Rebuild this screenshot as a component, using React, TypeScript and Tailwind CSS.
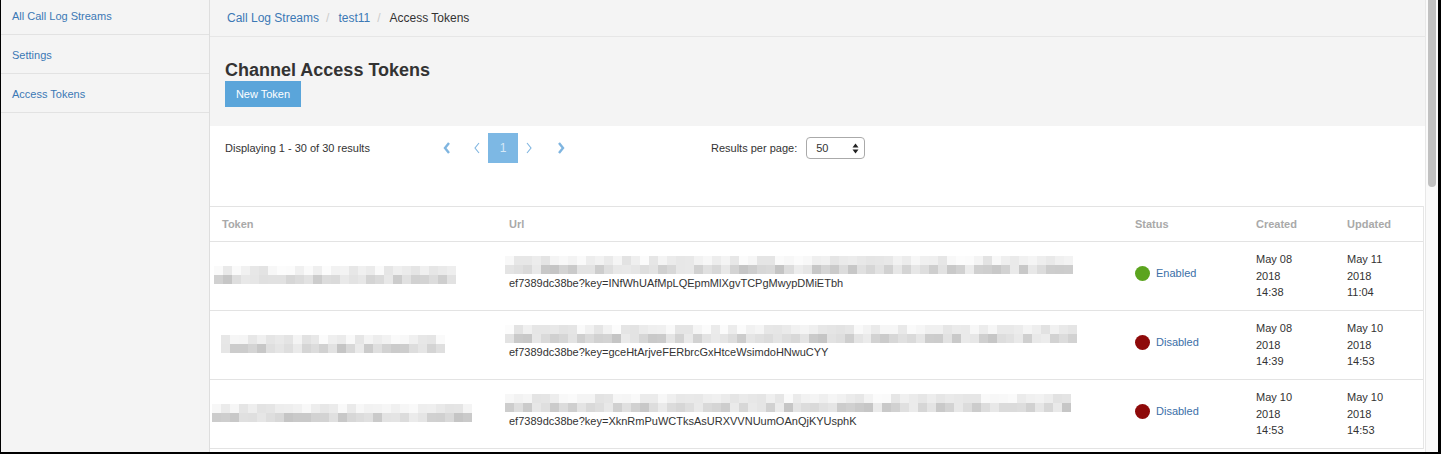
import React from "react";

const font = { fontFamily: '"Liberation Sans", Arial, sans-serif' };

// pseudo-random grays for the blurred (pixelated) cells
const shade = (seed: number, i: number, dark: boolean) => {
  const x = Math.sin(seed * 97.13 + i * 12.9898) * 43758.5453;
  const r = x - Math.floor(x);
  const base = dark ? 196 : 226;
  const span = dark ? 40 : 26;
  const v = Math.round(base + r * span);
  return `rgb(${v},${v},${v})`;
};

const Mosaic = ({ width, seed }: { width: number; seed: number }) => {
  const cols = Math.round(width / 9);
  return (
    <div className="flex flex-col" style={{ width }}>
      {[false, true].map((dark, row) => (
        <div key={row} className="flex h-[9px]">
          {Array.from({ length: cols }).map((_, i) => (
            <div
              key={i}
              className="h-full flex-1"
              style={{ background: shade(seed + row * 7, i, dark) }}
            />
          ))}
        </div>
      ))}
    </div>
  );
};

const Chevron = ({ dir, bold }: { dir: "l" | "r"; bold?: boolean }) => (
  <svg width="8" height="12" viewBox="0 0 8 12">
    <path
      d={dir === "l" ? "M6 1 L2 6 L6 11" : "M2 1 L6 6 L2 11"}
      fill="none"
      stroke="#7fb5e0"
      strokeWidth={bold ? 2.4 : 1.1}
    />
  </svg>
);

const rows = [
  {
    tokenW: 242,
    tokenOff: -4,
    urlW: 568,
    key: "INfWhUAfMpLQEpmMlXgvTCPgMwypDMiETbh",
    enabled: true,
    created: ["May 08", "2018", "14:38"],
    updated: ["May 11", "2018", "11:04"],
  },
  {
    tokenW: 224,
    tokenOff: 3,
    urlW: 572,
    key: "gceHtArjveFERbrcGxHtceWsimdoHNwuCYY",
    enabled: false,
    created: ["May 08", "2018", "14:39"],
    updated: ["May 10", "2018", "14:53"],
  },
  {
    tokenW: 260,
    tokenOff: -6,
    urlW: 566,
    key: "XknRmPuWCTksAsURXVVNUumOAnQjKYUsphK",
    enabled: false,
    created: ["May 10", "2018", "14:53"],
    updated: ["May 10", "2018", "14:53"],
  },
];

const cols = "grid grid-cols-[287px_626px_121px_91px_89px]";

export default function App() {
  return (
    <div
      className="flex h-[454px] w-[1441px] overflow-hidden border-b-2 border-l border-r-[3px] border-black bg-white text-[#333]"
      style={font}
    >
      {/* sidebar */}
      <aside className="flex w-[209px] shrink-0 flex-col border-r border-[#dedede] bg-[#f4f4f4] text-[11px] text-[#3b78b5]">
        <div className="flex h-[35px] items-center border-b border-[#e2e2e2] pb-[1px] pl-[11px]">
          All Call Log Streams
        </div>
        <div className="flex h-[39px] items-center border-b border-[#e2e2e2] pl-[11px] pt-[2px]">
          Settings
        </div>
        <div className="flex h-[39px] items-center border-b border-[#e2e2e2] pl-[11px] pt-[2px]">
          Access Tokens
        </div>
      </aside>

      {/* main */}
      <main className="flex w-[1215px] shrink-0 flex-col">
        <div className="flex h-[37px] items-center gap-[7px] border-b border-[#e6e6e6] bg-[#f4f4f4] pl-[17px] text-[12px]">
          <span className="text-[#3b78b5]">Call Log Streams</span>
          <span className="text-[#ccc]">/</span>
          <span className="ml-[2px] text-[#3b78b5]">test11</span>
          <span className="text-[#ccc]">/</span>
          <span className="ml-[2px] text-[#333]">Access Tokens</span>
        </div>
        <div className="flex h-[89px] flex-col bg-[#f4f4f4] pl-[15px] pt-[22px]">
          <h1 className="text-[18px] font-bold leading-[22px] text-[#333]">
            Channel Access Tokens
          </h1>
          <button className="h-[26px] w-[76px] bg-[#5aa5da] text-[11px] text-white">
            New Token
          </button>
        </div>

        <div className="flex h-[80px] items-start pl-[15px] pt-[7px] text-[11px]">
          <div className="w-[207px] pt-[7px] text-[11px]">
            Displaying 1 - 30 of 30 results
          </div>
          <div className="flex h-[30px] items-center">
            <span className="flex w-[30px] justify-center">
              <Chevron dir="l" bold />
            </span>
            <span className="flex w-[26px] justify-center pl-[4px]">
              <Chevron dir="l" />
            </span>
            <span className="flex h-[30px] w-[30px] items-center justify-center bg-[#7db8e4] text-[12px] text-[#d6e9f7]">
              1
            </span>
            <span className="flex w-[22px] justify-center">
              <Chevron dir="r" />
            </span>
            <span className="flex w-[40px] justify-center pl-[2px]">
              <Chevron dir="r" bold />
            </span>
          </div>
          <div className="ml-[131px] flex items-center gap-[9px] pt-[4px]">
            <span>Results per page:</span>
            <div className="flex h-[22px] w-[59px] items-center justify-between rounded-[4px] border border-[#aaa] bg-white pl-[9px] pr-[5px]">
              <span>50</span>
              <svg width="7" height="11" viewBox="0 0 7 11">
                <path d="M3.5 0.5 L6.5 4.5 L0.5 4.5 Z M3.5 10.5 L6.5 6.5 L0.5 6.5 Z" fill="#222" />
              </svg>
            </div>
          </div>
        </div>

        {/* table */}
        <div className="flex w-[1214px] flex-col border-r border-[#e6e6e6] text-[11px]">
          <div className={`${cols} h-[36px] items-center border-y border-[#e3e3e3] font-bold text-[#a9a9a9]`}>
            <div className="pl-[12px]">Token</div>
            <div className="pl-[12px]">Url</div>
            <div className="pl-[12px]">Status</div>
            <div className="pl-[12px]">Created</div>
            <div className="pl-[12px]">Updated</div>
          </div>
          {rows.map((r, idx) => (
            <div
              key={idx}
              className={`${cols} h-[69px] items-center border-b border-[#e3e3e3]`}
            >
              <div className="pb-[2px] pl-[8px]" style={{ marginLeft: r.tokenOff }}>
                <Mosaic width={r.tokenW} seed={idx * 3 + 1} />
              </div>
              <div className="flex flex-col pb-[5px] pl-[8px]">
                <Mosaic width={r.urlW} seed={idx * 5 + 11} />
                <div className="mt-[1px] pl-[4px] leading-[16px]">
                  ef7389dc38be?key={r.key}
                </div>
              </div>
              <div className="flex items-center gap-[6px] pb-[6px] pl-[12px]">
                <span
                  className={`h-[15px] w-[15px] rounded-full ${
                    r.enabled ? "bg-[#5ba41e]" : "bg-[#8e0a0a]"
                  }`}
                />
                <span className="text-[#3b6fa7]">
                  {r.enabled ? "Enabled" : "Disabled"}
                </span>
              </div>
              <div className="pl-[12px] leading-[16.5px]">
                {r.created.map((l) => (
                  <div key={l}>{l}</div>
                ))}
              </div>
              <div className="pl-[12px] leading-[16.5px]">
                {r.updated.map((l) => (
                  <div key={l}>{l}</div>
                ))}
              </div>
            </div>
          ))}
        </div>
      </main>

      {/* scrollbar */}
      <div className="flex w-[13px] shrink-0 justify-center border-l border-[#e8e8e8] bg-[#fafafa]">
        <div className="h-[187px] w-[8px] rounded-b-full bg-[#c1c1c1]" />
      </div>
    </div>
  );
}
